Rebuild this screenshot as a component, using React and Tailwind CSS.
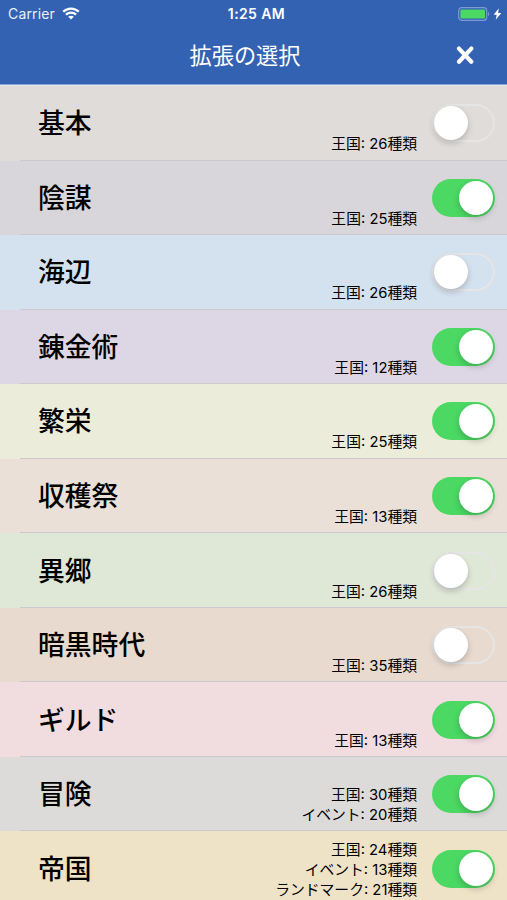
import { useState } from "react";

const EXPANSIONS = [
    { name: "基本", bg: "bg-[#dfdcd9]", counts: ["王国: 26種類"], on: false },
    { name: "陰謀", bg: "bg-[#d8d6da]", counts: ["王国: 25種類"], on: true },
    { name: "海辺", bg: "bg-[#d4e1ef]", counts: ["王国: 26種類"], on: false },
    { name: "錬金術", bg: "bg-[#ddd6e4]", counts: ["王国: 12種類"], on: true },
    { name: "繁栄", bg: "bg-[#ebedda]", counts: ["王国: 25種類"], on: true },
    { name: "収穫祭", bg: "bg-[#eae0d8]", counts: ["王国: 13種類"], on: true },
    { name: "異郷", bg: "bg-[#dfe7d7]", counts: ["王国: 26種類"], on: false },
    { name: "暗黒時代", bg: "bg-[#e8dacf]", counts: ["王国: 35種類"], on: false },
    { name: "ギルド", bg: "bg-[#f1dce0]", counts: ["王国: 13種類"], on: true },
    { name: "冒険", bg: "bg-[#dcdbda]", counts: ["王国: 30種類", "イベント: 20種類"], on: true },
    {
        name: "帝国",
        bg: "bg-[#eee2c7]",
        counts: ["王国: 24種類", "イベント: 13種類", "ランドマーク: 21種類"],
        on: true,
    },
];

const StatusBar = () => (
    <div className="grid grid-cols-3 items-center h-[27px] px-2 text-[14px] leading-none">
        <div className="flex items-center gap-[7px]">
            <span className="tracking-[0.15px] opacity-90">Carrier</span>
            <svg width="18" height="13" viewBox="0 0 18 13" fill="none" stroke="white" strokeWidth="2.3">
                <path d="M1.2 4.8C5.5 .5 12.5 .5 16.8 4.8" />
                <path d="M4 7.7c2.8-2.7 7.2-2.7 10 0" />
                <path d="M9 12.6 6.2 9.8c1.6-1.5 4-1.5 5.6 0Z" fill="white" stroke="none" />
            </svg>
        </div>
        <span className="text-center text-[14px] font-semibold pl-[6px] tracking-[0.4px]">1:25 AM</span>
        <div className="flex items-center justify-end gap-[3px] -mr-[3px]">
            <svg width="32" height="14" viewBox="0 0 32 14" fill="none">
                <rect x=".7" y=".7" width="28" height="12.6" rx="3" stroke="#7d9bd2" strokeWidth="1.2" />
                <rect x="2.4" y="2.4" width="24.6" height="9.2" rx="1.4" fill="#4bd963" />
                <path d="M30 4.8c1.6.8 1.6 3.6 0 4.4Z" fill="#7d9bd2" />
            </svg>
            <svg width="9" height="12" viewBox="0 0 9 12" fill="white">
                <path d="M5.8.3.7 6.7h3L2.7 11.8 8.3 5H5.1Z" />
            </svg>
        </div>
    </div>
);

const Switch = ({ on, onChange, label }) => (
    <button
        role="switch"
        aria-checked={on}
        aria-label={label}
        onClick={onChange}
        className={`flex items-center shrink-0 w-[63px] h-[38px] rounded-full
            ${on ? "bg-[#4bd863] justify-end px-[2px]" : "border-2 border-[#e5e5e5] justify-start"}`}
    >
        <span className="size-[34px] rounded-full bg-white shadow-[0_3px_6px_rgba(0,0,0,0.2)]" />
    </button>
);

const ExpansionRow = ({ item, on, onToggle, last }) => (
    <li className={`relative flex h-[74.55px] shrink-0 pl-[38px] pr-[12px] ${item.bg}`}>
        <h2 className="flex-1 pt-[17.3px] text-[26.8px] leading-[40px] font-medium">{item.name}</h2>
        <div className="flex flex-col justify-end pb-[5.5px] mr-[15px] text-right text-[14.8px] leading-[19.8px]">
            {item.counts.map((count) => (
                <span key={count}>{count}</span>
            ))}
        </div>
        <div className="pt-[18.3px]">
            <Switch on={on} onChange={onToggle} label={item.name} />
        </div>
        {/* inset separator */}
        {!last && <span className="absolute left-5 right-0 bottom-0 h-px bg-[#cbc9ce]" />}
    </li>
);

export default function App() {
    const [enabled, setEnabled] = useState(EXPANSIONS.map((e) => e.on));

    const toggle = (index) => setEnabled((prev) => prev.map((v, i) => (i === index ? !v : v)));

    return (
        <div className="flex flex-col w-[507px] h-[900px] overflow-hidden bg-[#dfdcd9] text-black font-[Inter,'Noto_Sans_CJK_JP',sans-serif]">
            <header className="h-[86px] shrink-0 bg-[#3462b3] text-white border-b border-[#e3e6ec]">
                <div className="h-[85px] border-b border-[#8ba4d2]">
                    <StatusBar />
                    <div className="grid grid-cols-[1fr_auto_1fr] items-center h-[56px] pl-[8px] pr-[32px]">
                        <span />
                        <h1 className="text-[22.2px] leading-none font-normal pl-[7px] pt-[2px]">拡張の選択</h1>
                        <button aria-label="閉じる" className="justify-self-end">
                            <svg width="20" height="19" viewBox="0 0 20 19" stroke="white" strokeWidth="4.2" strokeLinecap="round">
                                <path d="M4 2.6 16.3 15.8M16.3 2.6 4 15.8" />
                            </svg>
                        </button>
                    </div>
                </div>
            </header>
            <ul className="flex flex-col">
                {EXPANSIONS.map((item, i) => (
                    <ExpansionRow
                        key={item.name}
                        item={item}
                        on={enabled[i]}
                        onToggle={() => toggle(i)}
                        last={i === EXPANSIONS.length - 1}
                    />
                ))}
            </ul>
        </div>
    );
}
